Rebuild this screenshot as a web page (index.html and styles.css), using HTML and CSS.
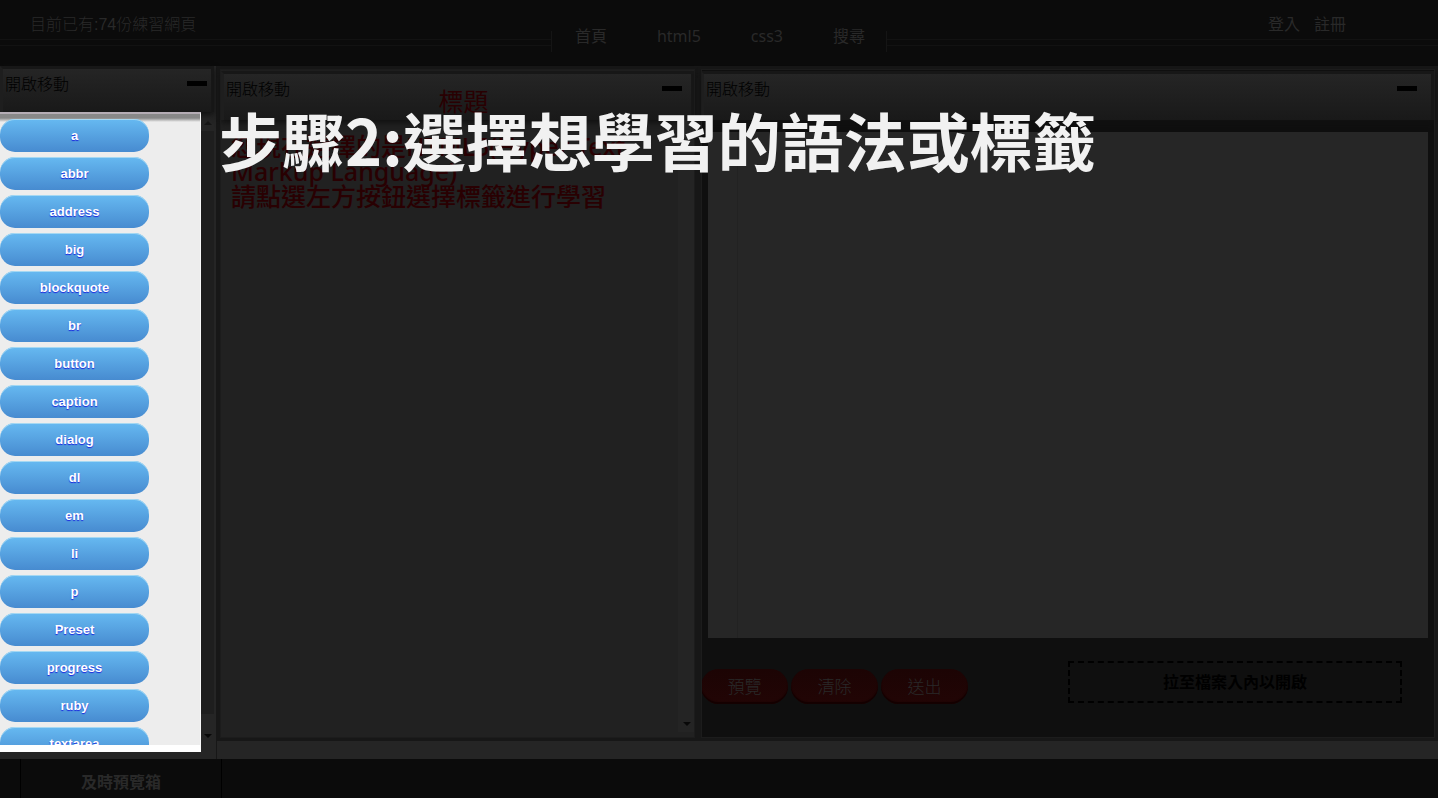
FILE: index.html
```html
<!DOCTYPE html>
<html lang="zh-Hant">
<head>
<meta charset="utf-8">
<title>步驟2</title>
<link rel="stylesheet" href="styles.css">
</head>
<body>
<header class="top">
  <div class="top-side"><span class="count">目前已有:74份練習網頁</span></div>
  <nav class="nav">
    <a href="#">首頁</a><a href="#">html5</a><a href="#">css3</a><a href="#">搜尋</a>
  </nav>
  <div class="top-side account"><a href="#">登入</a><a href="#">註冊</a></div>
</header>

<main class="panels">
  <section class="sidebar">
    <div class="panel-head side-head"><span>開啟移動</span><button class="minimize" aria-label="縮小"></button></div>
    <div class="side-body">
      <div class="spotlight">
        <div class="tags">
          <button class="tag">a</button>
          <button class="tag">abbr</button>
          <button class="tag">address</button>
          <button class="tag">big</button>
          <button class="tag">blockquote</button>
          <button class="tag">br</button>
          <button class="tag">button</button>
          <button class="tag">caption</button>
          <button class="tag">dialog</button>
          <button class="tag">dl</button>
          <button class="tag">em</button>
          <button class="tag">li</button>
          <button class="tag">p</button>
          <button class="tag">Preset</button>
          <button class="tag">progress</button>
          <button class="tag">ruby</button>
          <button class="tag">textarea</button>
        </div>
      </div>
      <div class="scroll"><i class="up"></i><i class="thumb"></i><i class="down"></i></div>
    </div>
  </section>

  <section class="panel lesson">
    <div class="panel-head"><span>開啟移動</span><button class="minimize" aria-label="縮小"></button></div>
    <div class="lesson-body">
      <div class="lesson-text">
        <h2>標題</h2>
        <p>您現在選擇的是HTML5(Hyper Text<br>Markup Language)<br>請點選左方按鈕選擇標籤進行學習</p>
      </div>
      <div class="scroll lesson-scroll"><i class="down"></i></div>
    </div>
  </section>

  <section class="panel editor">
    <div class="panel-head"><span>開啟移動</span><button class="minimize" aria-label="縮小"></button></div>
    <textarea class="code" aria-label="程式碼"></textarea>
    <div class="actions">
      <div class="buttons">
        <button class="red">預覽</button><button class="red">清除</button><button class="red">送出</button>
      </div>
      <div class="drop">拉至檔案入內以開啟</div>
    </div>
  </section>
</main>

<footer class="bottom"><button class="preview">及時預覽箱</button></footer>

<h1 class="step">步驟2:選擇想學習的語法或標籤</h1>
</body>
</html>
```

FILE: styles.css
```css
* { box-sizing: border-box; }

body {
  margin: 0;
  height: 100vh;
  display: flex;
  flex-direction: column;
  overflow: hidden;
  background: #252525;
  color: #000;
  font: 16px/24px "Noto Sans", "Noto Sans CJK TC", sans-serif;
}

a { color: #292929; text-decoration: none; }
button { border: 0; padding: 0; font: inherit; }

.top {
  flex: 0 0 66px;
  display: grid;
  grid-template-columns: 1fr 336px 1fr;
  background: #0b0b0b;
  color: #292929;
}
.top-side {
  padding: 12px 30px;
  background: linear-gradient(#121212, #121212) 0 39px / 100% 1px no-repeat,
    linear-gradient(#121212, #121212) 0 45px / 100% 1px no-repeat;
}
.count { font-family: "Liberation Sans", "Noto Sans CJK TC", sans-serif; font-weight: 300; }
.nav {
  display: flex;
  justify-content: center;
  gap: 50px;
  height: 21px;
  margin-top: 31px;
  padding-left: 2px;
  border: solid #151515;
  border-width: 0 1px;
}
.nav a { line-height: 10px; }
.account {
  display: flex;
  justify-content: flex-end;
  gap: 14px;
  padding-right: 92px;
}

.panels {
  flex: 1;
  min-height: 0;
  display: grid;
  grid-template: 100% / 217px 481fr 740fr;
  background: #252525;
}
.panel-head {
  display: flex;
  justify-content: space-between;
  align-items: flex-start;
  background: linear-gradient(#252525, #191919);
  border: 3px solid #1e1e1e;
  border-right-color: #171717;
  border-top-color: #171717;
  border-bottom: 0;
  box-shadow: 0 3px 6px #111;
  font-weight: 300;
}
.panel-head span { padding: 3px 2px; }
.minimize {
  width: 20px;
  height: 5px;
  margin: 12px 9px;
  background: #000;
}

.sidebar {
  min-height: 0;
  display: flex;
  flex-direction: column;
  border-right: 1px solid #171717;
}
.side-head {
  flex: none;
  height: 46px;
  margin-right: 2px;
}
.side-head .minimize { margin-right: 4px; }
.side-body {
  flex: 1;
  min-height: 0;
  display: flex;
  margin-bottom: 7px;
}
.spotlight {
  position: relative;
  flex: 0 0 201px;
  background: linear-gradient(#888 4px, #ededed 8px);
  border-top: 2px solid #b5adb5;
  border-bottom: 7px solid #fff;
  border-right: 1px solid #f8f8f8;
  overflow: hidden;
  padding-top: 5px;
}
.tags {
  display: flex;
  flex-direction: column;
  align-items: flex-start;
  gap: 5px;
}
.tag {
  flex: none;
  width: 149px;
  height: 33px;
  border-radius: 15px;
  background: linear-gradient(#66b9f1, #478bd0);
  box-shadow: inset 0 1px #a5d8f2;
  color: #fff;
  font: bold 13px/16px "Liberation Sans", sans-serif;
  text-shadow: 0 1px 1px #1723e0;
}
.scroll {
  flex: 0 0 13px;
  display: flex;
  flex-direction: column;
  align-items: center;
  padding-top: 9px;
}
.up, .down {
  border: 4px solid transparent;
  border-top: 0;
  border-bottom-color: #151515;
}
.down { transform: rotate(180deg); border-bottom-color: #080808; }
.thumb {
  flex: 1;
  width: 100%;
  margin: 6px 0 20px;
  background: #1e1e1e;
}
.side-body .down { margin-bottom: 14px; }

.panel {
  min-width: 0;
  display: flex;
  flex-direction: column;
  margin-bottom: 18px;
  border: 3px solid #171717;
  outline: 1px solid #1c1c1c;
  outline-offset: -4px;
}
.panel .panel-head { height: 49px; flex: none; margin: 2px 1px 0; }
.lesson { background: #212121; }
.lesson-body { flex: 1; display: flex; min-height: 0; }
.lesson-text {
  flex: 1;
  padding-left: 11px;
  color: #290002;
  font-size: 25px;
  line-height: 25px;
  font-weight: 500;
}
.lesson-text h2 {
  position: relative;
  z-index: 1;
  margin: -31px 0 20px;
  padding-left: 18px;
  text-align: center;
  font-size: 25px;
  font-weight: 400;
}
.lesson-text p { margin: 0; white-space: nowrap; }
.lesson-scroll {
  flex-basis: 17px;
  justify-content: flex-end;
  margin-bottom: 6px;
  padding-bottom: 6px;
  background: #242424;
}

.editor { background: #0f0f0f; }
.panel.editor .panel-head { margin-left: 0; }
.editor .minimize { margin-right: 14px; }
.code {
  flex: 1;
  min-height: 0;
  margin: 12px 7px 0;
  border: 0;
  resize: none;
  background: linear-gradient(90deg, #262626 29px, #222 29px, #222 30px, #262626 30px);
}
.actions {
  display: flex;
  justify-content: space-between;
  height: 100px;
  padding: 23px 33px 0 0;
}
.buttons { display: flex; gap: 3px; padding-top: 8px; }
.red {
  width: 87px;
  height: 35px;
  border-radius: 18px;
  background: linear-gradient(#1c0404, #220505);
  box-shadow: inset 0 -2px 1px #140101;
  color: #292929;
  font-size: 17px;
  font-weight: 300;
}
.drop {
  width: 334px;
  height: 42px;
  border: 2px dashed #000;
  text-align: center;
  line-height: 38px;
  font-weight: 700;
}

.bottom {
  flex: 0 0 39px;
  padding-left: 20px;
  background: #0b0b0b;
}
.preview {
  width: 202px;
  height: 100%;
  padding-top: 6px;
  border: solid #000;
  border-width: 0 1px;
  background: transparent;
  color: #292929;
  font-weight: 700;
}

.step {
  position: absolute;
  top: 108px;
  left: 219px;
  z-index: 2;
  margin: 0;
  color: #f1f1f1;
  font: 700 63px/62px "Noto Sans CJK TC", sans-serif;
  white-space: nowrap;
}
```
